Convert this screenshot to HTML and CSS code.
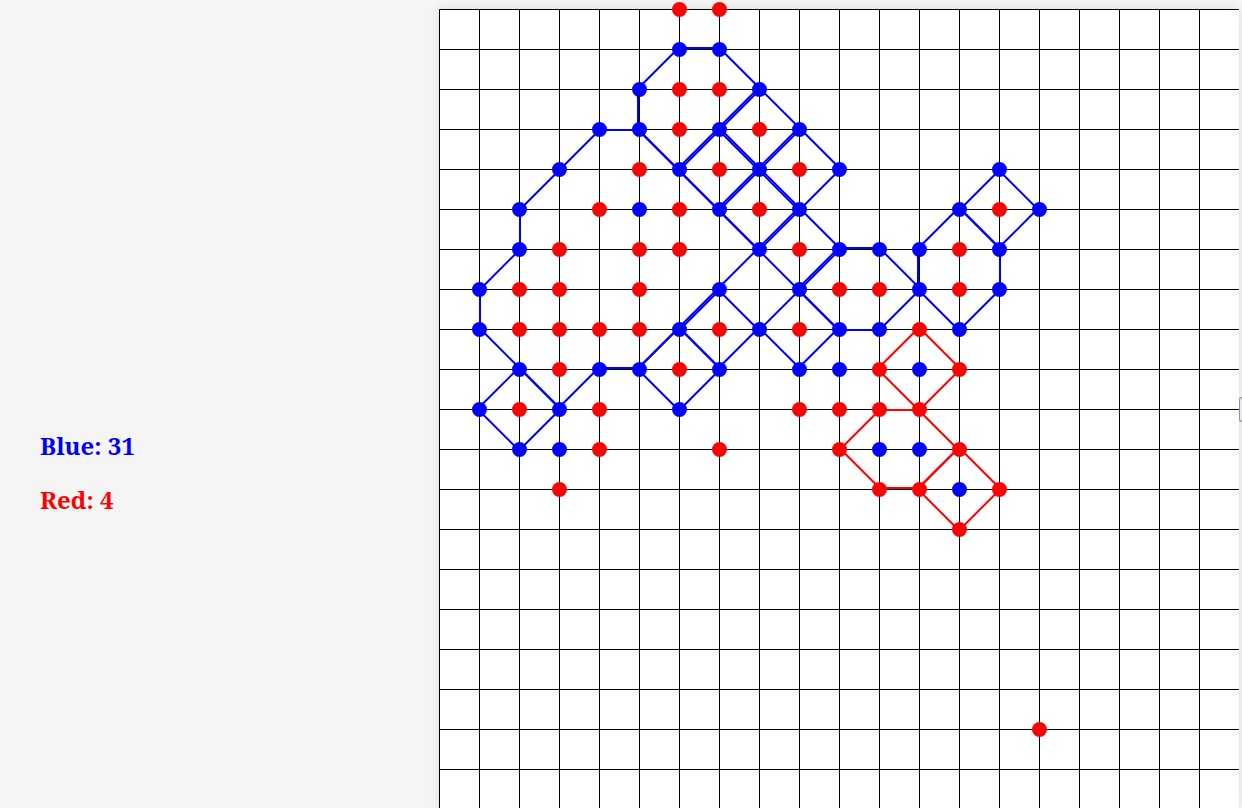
FILE: index.html
```html
<!DOCTYPE html>
<html lang="en">
<head>
<meta charset="utf-8">
<title>Dots</title>
<link rel="stylesheet" href="styles.css">
</head>
<body>
<main class="game">
  <section class="scores" aria-label="Score">
    <h2 class="score score-blue">Blue: 31</h2>
    <h2 class="score score-red">Red: 4</h2>
  </section>
  <section class="board">
    <svg class="field" viewBox="0 0 800 800" role="img" aria-label="Game board">
      <defs>
        <pattern id="cell" width="40" height="40" patternUnits="userSpaceOnUse">
          <path class="grid-line" d="M0 0H40V1H1V40H0Z"/>
        </pattern>
      </defs>
      <rect width="800" height="800" fill="url(#cell)"/>
      <g id="edges"></g>
      <g id="dots"></g>
    </svg>
  </section>
  <aside class="actions">
    <button class="action" type="button" aria-label="New game"></button>
  </aside>
</main>
<script src="board.js"></script>
</body>
</html>
```

FILE: styles.css
```css
body {
  margin: 0;
  background: #f5f5f5;
  font-family: "Noto Serif", "Droid Serif", "DejaVu Serif", serif;
  overflow: hidden;
}

.game {
  display: grid;
  grid-template-columns: minmax(160px, 1fr) 800px 3px;
  padding-top: 9px;
}

.scores {
  padding: 420px 40px 0;
}

.score {
  margin: 0 0 20px;
  font-size: 24px;
  line-height: 34px;
  font-weight: 700;
}

.score-blue {
  color: #0000ff;
}

.score-red {
  color: #ff0000;
}

.board {
  background: #ffffff;
  box-shadow: 0 0 10px rgba(0, 0, 0, 0.1);
}

.field {
  display: block;
  width: 100%;
  overflow: visible;
}

.grid-line {
  fill: #000000;
}

.blue {
  fill: #0000ff;
}

.red {
  fill: #ff0000;
}

.actions {
  display: flex;
  align-items: center;
}

.action {
  width: 100%;
  height: 25px;
  padding: 0;
  border: 1px solid #8f8f9d;
  border-right: 0;
  border-radius: 3px 0 0 3px;
  background: #e9e9ed;
}
```

FILE: board.js
```js
const CELL = 40;
const EDGE = 2;
const SVG = "http://www.w3.org/2000/svg";

// Closed outlines, in walking order, as [column, row] crossings.
const outlines = [
  ["blue", [[1,8],[1,7],[2,6],[2,5],[3,4],[4,3],[5,3],[6,4],[7,5],[8,6],[7,7],[6,8],[5,9],[4,9],[3,10],[2,9]]],
  ["blue", [[6,1],[5,2],[5,3],[6,4],[7,3],[8,2],[7,1]]],
  ["blue", [[7,3],[6,4],[7,5],[8,4]]],
  ["blue", [[8,4],[7,5],[8,6],[9,5]]],
  ["blue", [[8,2],[7,3],[8,4],[9,3]]],
  ["blue", [[9,3],[8,4],[9,5],[10,4]]],
  ["blue", [[9,5],[8,6],[9,7],[10,6]]],
  ["blue", [[10,6],[9,7],[10,8],[11,8],[12,7],[11,6]]],
  ["blue", [[9,7],[10,8],[9,9],[8,8]]],
  ["blue", [[6,8],[7,7],[8,8],[7,9]]],
  ["blue", [[7,9],[6,8],[5,9],[6,10]]],
  ["blue", [[3,10],[2,9],[1,10],[2,11]]],
  ["blue", [[13,5],[12,6],[12,7],[13,8],[14,7],[14,6]]],
  ["blue", [[14,6],[13,5],[14,4],[15,5]]],
  ["red", [[12,8],[11,9],[12,10],[13,9]]],
  ["red", [[11,10],[12,10],[13,11],[12,12],[11,12],[10,11]]],
  ["red", [[13,11],[12,12],[13,13],[14,12]]]
];

// Dots that are not corners of an outline.
const loose = {
  blue: [[5,5],[3,11],[10,9],[12,9],[11,11],[12,11],[13,12]],
  red: [
    [6,0],[7,0],[6,2],[7,2],[6,3],[8,3],[5,4],[7,4],[9,4],
    [4,5],[6,5],[8,5],[14,5],[3,6],[5,6],[6,6],[9,6],[13,6],
    [2,7],[3,7],[5,7],[10,7],[11,7],[13,7],
    [2,8],[3,8],[4,8],[5,8],[7,8],[9,8],[3,9],[6,9],
    [2,10],[4,10],[9,10],[10,10],[4,11],[7,11],[3,12],[15,18]
  ]
};

function add(parent, tag, attributes) {
  const node = document.createElementNS(SVG, tag);
  for (const [name, value] of Object.entries(attributes)) {
    node.setAttribute(name, value);
  }
  document.getElementById(parent).append(node);
}

function addEdge(color, from, to) {
  const dx = (to[0] - from[0]) * CELL;
  const dy = (to[1] - from[1]) * CELL;
  const angle = Math.atan2(dy, dx) * 180 / Math.PI;
  add("edges", "rect", {
    class: color,
    width: Math.hypot(dx, dy),
    height: EDGE,
    transform: `translate(${from[0] * CELL} ${from[1] * CELL}) rotate(${angle})`
  });
}

const drawn = new Set();
function addDot(color, point) {
  if (drawn.has(point.join())) return;
  drawn.add(point.join());
  add("dots", "circle", {
    class: color,
    cx: point[0] * CELL + 0.5,
    cy: point[1] * CELL + 0.5,
    r: 7.5
  });
}

for (const [color, points] of outlines) {
  points.forEach((point, i) => {
    addEdge(color, point, points[(i + 1) % points.length]);
    addDot(color, point);
  });
}
for (const color of Object.keys(loose)) {
  loose[color].forEach(point => addDot(color, point));
}
```
